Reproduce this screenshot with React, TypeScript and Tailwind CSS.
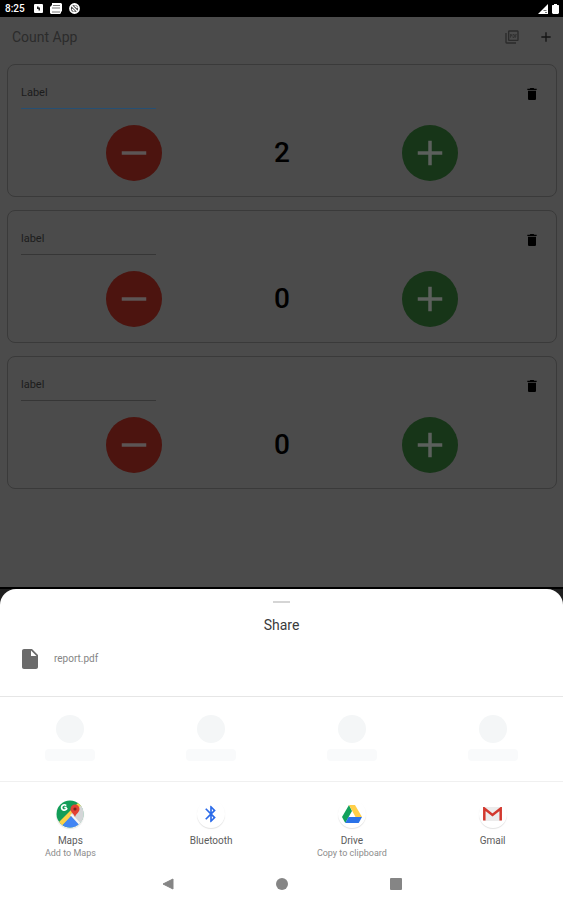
import { useState } from 'react';
import { MdAdd, MdBluetooth, MdDelete, MdInsertDriveFile, MdOutlinePictureAsPdf, MdRemove } from 'react-icons/md';

type Counter = { id: number; placeholder: string; count: number; active?: boolean };

const initialCounters: Counter[] = [
  { id: 1, placeholder: 'Label', count: 2, active: true },
  { id: 2, placeholder: 'label', count: 0 },
  { id: 3, placeholder: 'label', count: 0 },
];

function StatusBar() {
  return (
    <div className="flex h-[17px] items-center justify-between bg-black pr-1 pl-[5px] text-white">
      <div className="flex items-center gap-[7px]">
        <span className="mr-[2px] text-[10px] leading-3 font-medium">8:25</span>
        <svg className="size-[9px]" viewBox="0 0 9 9">
          <rect width="9" height="9" rx="1" fill="#fff" />
          <path d="M3 2.500h1.500v1H6v3H4.500V5H3z" fill="#222" />
        </svg>
        <svg className="h-[11px] w-3" viewBox="0 0 12 11">
          <path d="M2 0h9l1 1v7l-1 1v1l-1 1H1l-1-1V4l2-2z" fill="#fff" />
          <path d="M3 2.500h7M2 5h8M2 9h8" stroke="#777" strokeWidth="1" />
        </svg>
        <svg className="size-[11px]" viewBox="0 0 11 11">
          <circle cx="5.500" cy="5.500" r="4.500" fill="#444" stroke="#fff" strokeWidth="1.800" />
          <path d="M2 2l7 7M5.500 2.500l3 2.500M3 6l2.500 2.500" stroke="#fff" strokeWidth="1.300" />
        </svg>
      </div>
      <div className="flex items-center gap-1">
        <svg className="size-[10px]" viewBox="0 0 10 10">
          <path d="M10 0v10H0z" fill="#fff" />
          <path d="M5.500 6.500h3M7 8.500h2" stroke="#777" />
        </svg>
        <svg className="h-[10px] w-[7px]" viewBox="0 0 7 10">
          <path d="M2 0h3v1h1.500l.5.5V9l-1 1H1L0 9V1.500L.5 1H2z" fill="#fff" />
        </svg>
      </div>
    </div>
  );
}

function CounterCard({ counter, onChange, onDelete }: { counter: Counter; onChange: (delta: number) => void; onDelete: () => void }) {
  const field = counter.active ? 'border-[#264f73] placeholder:first-letter:text-[#0d3a40]' : 'border-[#363636]';
  return (
    <section className="h-[133px] rounded-lg border border-[#3a3a3a]">
      <div className="flex items-start justify-between pt-[15px] pr-4 pl-[13px]">
        <input
          aria-label="Counter label"
          placeholder={counter.placeholder}
          className={`h-[29px] w-[135px] border-b bg-transparent pb-1 text-[11px] text-[#1c1c1c] outline-none placeholder:text-[#1c1c1c] ${field}`}
        />
        <button aria-label="Delete" onClick={onDelete} className="mt-[6px] text-black"><MdDelete className="size-4" /></button>
      </div>
      <div className="mt-4 grid grid-cols-3 items-center justify-items-center px-13">
        <button aria-label="Decrease" onClick={() => onChange(-1)} className="flex size-14 items-center justify-center rounded-full bg-[#4c140f] text-[#5c5555]">
          <MdRemove className="size-[42px]" />
        </button>
        <span className="text-[28px] leading-8 font-medium text-black">{counter.count}</span>
        <button aria-label="Increase" onClick={() => onChange(1)} className="flex size-14 items-center justify-center rounded-full bg-[#173518] text-[#5c605c]">
          <MdAdd className="size-[42px]" />
        </button>
      </div>
    </section>
  );
}

function MapsIcon() {
  return (
    <svg className="size-7" viewBox="0 0 28 28">
      <defs><clipPath id="maps-clip"><circle cx="14" cy="14" r="13.500" /></clipPath></defs>
      <g clipPath="url(#maps-clip)">
        <rect width="28" height="28" fill="#129d58" />
        <path d="M14 14L28 4v24H18z" fill="#d9dbdc" />
        <path d="M0 25L23 2l4 3L4 28z" fill="#fbd047" />
        <path d="M15 14L28 3v25h-2z" fill="#d4d6d8" />
        <path d="M14 15l12 13h3l-13-14z" fill="#f7f7f7" />
        <path d="M3 29l12-13 12 13z" fill="#4285f4" />
      </g>
      <path d="M10.800 7.500H8.300m1.900-1.900A2.700 2.700 0 1 0 10.900 8" fill="none" stroke="#fff" strokeWidth="1.700" />
      <path d="M19 17c-.6-3-4.500-4.500-4.500-8a4.500 4.500 0 0 1 9 0c0 3.500-3.900 5-4.500 8z" fill="#e34133" />
      <circle cx="19" cy="9" r="1.600" fill="#7b241c" />
    </svg>
  );
}

function DriveIcon() {
  return (
    <svg className="h-[18px] w-5" viewBox="0 0 20 18">
      <path d="M7 0L0 12l3.300 6L10 6z" fill="#11a15c" />
      <path d="M7 0h6l7 12h-6.500z" fill="#ffcf48" />
      <path d="M6.500 12H20l-3.300 6H3.300z" fill="#2a72e8" />
    </svg>
  );
}

function GmailIcon() {
  return (
    <svg className="h-[14px] w-[19px]" viewBox="0 0 19 14">
      <rect x="1" width="17" height="14" rx="1" fill="#ececec" />
      <path d="M1.300 13.500V1.500l8.200 6.500 8.200-6.500v12" fill="none" stroke="#d2382e" strokeWidth="2.500" />
    </svg>
  );
}

const targets = [
  { name: 'Maps', hint: 'Add to Maps', icon: <MapsIcon /> },
  { name: 'Bluetooth', hint: '', icon: <MdBluetooth className="size-5 text-[#2a6ae9]" /> },
  { name: 'Drive', hint: 'Copy to clipboard', icon: <DriveIcon /> },
  { name: 'Gmail', hint: '', icon: <GmailIcon /> },
];

function ShareSheet() {
  return (
    <div className="border-t-2 border-black bg-[#1f1f1f]">
      <div role="dialog" aria-label="Share" className="rounded-t-2xl bg-white">
        <div className="flex flex-col items-center pt-3">
          <div className="h-[2px] w-[17px] bg-[#d5d5d5]" />
          <h2 className="mt-3 text-[14px] leading-5 text-[#3a3a3a]">Share</h2>
        </div>
        <div className="mt-3 flex h-[50px] items-start gap-3 border-b border-[#e6e6e6] pl-[18px]">
          <MdInsertDriveFile className="size-6 text-[#6b6b6b]" />
          <span className="text-[10px] leading-6 text-[#858585]">report.pdf</span>
        </div>
        <div className="grid h-[85px] grid-cols-4 border-b border-[#f0f0f0] pt-[18px]">
          {targets.map((t) => (
            <div key={t.name} className="flex flex-col items-center gap-[6px]">
              <div className="size-7 rounded-full bg-[#f4f6f7]" />
              <div className="h-3 w-[50px] rounded-sm bg-[#f9fafb]" />
            </div>
          ))}
        </div>
        <div className="grid grid-cols-4 pt-[18px]">
          {targets.map((t) => (
            <button key={t.name} className="flex flex-col items-center">
              <span className="flex size-7 items-center justify-center rounded-full shadow-[0_1px_1px_#e2e2e2]">{t.icon}</span>
              <span className="mt-[6px] text-[10px] leading-[13px] text-[#5c5c5c]">{t.name}</span>
              <span className="h-3 text-[9px] leading-3 text-[#8c8c8c]">{t.hint}</span>
            </button>
          ))}
        </div>
        <nav className="flex h-[41px] items-center justify-center gap-[102px] pt-2 text-[#858585]">
          <button aria-label="Back"><svg className="size-3" viewBox="0 0 12 12"><path d="M11 1v10L1 6z" fill="currentColor" stroke="currentColor" /></svg></button>
          <button aria-label="Home" className="size-3 rounded-full bg-current" />
          <button aria-label="Recent apps" className="size-3 rounded-[1px] bg-current" />
        </nav>
      </div>
    </div>
  );
}

export default function App() {
  const [counters, setCounters] = useState(initialCounters);

  const addCounter = () => setCounters((list) => [...list, { id: Date.now(), placeholder: 'label', count: 0 }]);
  const change = (id: number, delta: number) =>
    setCounters((list) => list.map((c) => (c.id === id ? { ...c, count: c.count + delta } : c)));
  const remove = (id: number) => setCounters((list) => list.filter((c) => c.id !== id));

  return (
    <div className="flex min-h-screen flex-col bg-[#4b4b4b] font-[Roboto,sans-serif]">
      <StatusBar />
      <header className="flex h-10 items-center justify-between pr-[9px] pl-3 text-[#2b2b2b]">
        <h1 className="text-[14px] leading-5">Count App</h1>
        <div className="flex items-center gap-[18px]">
          <button aria-label="Export PDF"><MdOutlinePictureAsPdf className="size-4" /></button>
          <button aria-label="Add counter" onClick={addCounter} className="text-[#141414]"><MdAdd className="size-4" /></button>
        </div>
      </header>
      <main className="flex flex-1 flex-col gap-[13px] pt-[7px] pr-[6px] pl-[7px]">
        {counters.map((c) => (
          <CounterCard key={c.id} counter={c} onChange={(d) => change(c.id, d)} onDelete={() => remove(c.id)} />
        ))}
      </main>
      <ShareSheet />
    </div>
  );
}
